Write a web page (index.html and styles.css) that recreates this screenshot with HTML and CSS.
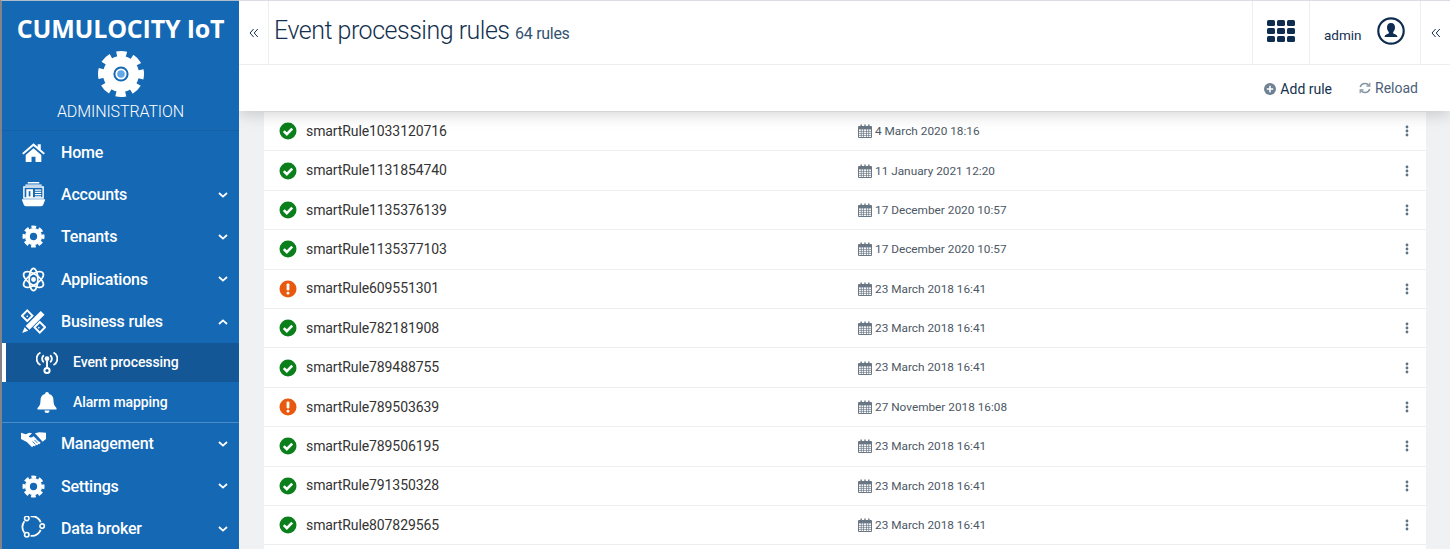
FILE: index.html
```html
<!DOCTYPE html>
<html lang="en">
<head>
<meta charset="utf-8"/>
<title>Event processing rules</title>
<link rel="stylesheet" href="styles.css">
</head>
<body>
<svg class="defs" width="0" height="0">
	<symbol id="gear" viewBox="0 0 24 24">
		<circle cx="12" cy="12" r="9" fill="#fff"/>
		<circle cx="12" cy="12" r="10" fill="none" stroke="#fff" stroke-width="3" stroke-dasharray="4.9 2.95" stroke-dashoffset="2.45"/>
		<circle cx="12" cy="12" r="3.8" fill="#1568b3"/>
	</symbol>
	<symbol id="check" viewBox="0 0 18 18">
		<circle cx="9" cy="9" r="8.5" fill="#0b7f1c"/>
		<path d="M4.8 9.2l3 3 5.4-5.6" fill="none" stroke="#fff" stroke-width="2.6"/>
	</symbol>
	<symbol id="warn" viewBox="0 0 18 18">
		<circle cx="9" cy="9" r="8.5" fill="#e8590f"/>
		<rect x="7.6" y="3.4" width="2.8" height="7.2" rx="1" fill="#fff"/>
		<rect x="7.6" y="11.8" width="2.8" height="2.8" rx="1" fill="#fff"/>
	</symbol>
	<symbol id="cal" viewBox="0 0 14 14">
		<path d="M.5 2.5h13v11H.5z" fill="#fff" stroke="#6a7784"/>
		<path d="M.5 3h13v2.4H.5z" fill="#6a7784"/>
		<path d="M3.2 .5v3M7 .5v3M10.8 .5v3" stroke="#6a7784" stroke-width="1.4"/>
		<path d="M1 7.4h12M1 9.4h12M1 11.4h12M3.3 5v8M5.5 5v8M8.5 5v8M10.7 5v8" stroke="#6a7784" stroke-width=".7"/>
	</symbol>
	<symbol id="dots" viewBox="0 0 4 12">
		<circle cx="2" cy="2" r="1.4" fill="#5e7283"/>
		<circle cx="2" cy="6" r="1.4" fill="#5e7283"/>
		<circle cx="2" cy="10" r="1.4" fill="#5e7283"/>
	</symbol>
	<symbol id="chev" viewBox="0 0 10 6">
		<path d="M1 1l4 3.6L9 1" fill="none" stroke="#fff" stroke-width="1.8"/>
	</symbol>
	<symbol id="dbl" viewBox="0 0 10 10">
		<path d="M4.6 1L1 5l3.6 4M8.8 1L5.2 5l3.6 4" fill="none" stroke="#14304f" stroke-width="1"/>
	</symbol>
</svg>

<aside class="sidebar">
	<div class="brand">
		<div class="brand-name">CUMULOCITY IoT</div>
		<svg class="brand-gear" viewBox="0 0 48 48" width="48" height="48">
			<use href="#gear" width="48" height="48"/>
			<circle cx="24" cy="24" r="5.6" fill="#fff"/>
			<circle cx="24" cy="24" r="3.8" fill="#62a8e8"/>
		</svg>
		<div class="brand-app">ADMINISTRATION</div>
	</div>
	<nav>
		<a class="nav-item">
			<svg class="nav-icon" viewBox="0 0 24 20"><path d="M12 1L1 10.6l1.4 1.4L12 3.8 21.6 12 23 10.6l-4-3.5V2h-3v2.5zM4.5 12.4V19h5.6v-5h3.8v5h5.6v-6.6L12 6z" fill="#fff"/></svg>
			Home
		</a>
		<a class="nav-item">
			<svg class="nav-icon" viewBox="0 0 26 26"><path d="M7 .8h12M4.5 3.2h17" stroke="#fff" stroke-width="1.4"/><path d="M3 5.2h20v11.5H3z" fill="none" stroke="#fff" stroke-width="1.5"/><path d="M5.500 7.500h7v9h-7z" fill="#fff"/><path d="M8 9.500h1.800v5.500H8z" fill="#1568b3"/><path d="M14.500 8.500h6.500M14.500 10.800h6.500M14.500 13.100h6.500M14.500 15.400h6.500" stroke="#fff" stroke-width="1.300"/><path d="M1 18h24v.8l-2 5.200q-.4 1.200-2 1.200H5q-1.600 0-2-1.200L1 18.800z" fill="#fff"/></svg>
			Accounts
			<svg class="chev"><use href="#chev"/></svg>
		</a>
		<a class="nav-item">
			<svg class="nav-icon small"><use href="#gear"/></svg>
			Tenants
			<svg class="chev"><use href="#chev"/></svg>
		</a>
		<a class="nav-item">
			<svg class="nav-icon" viewBox="0 0 26 26" fill="none" stroke="#fff" stroke-width="1.8"><ellipse cx="13" cy="13" rx="12" ry="5.5" transform="rotate(35 13 13)"/><ellipse cx="13" cy="13" rx="12" ry="5.5" transform="rotate(-35 13 13)"/><ellipse cx="13" cy="13" rx="4.5" ry="11.5"/><circle cx="13" cy="13" r="1.6" fill="#fff"/></svg>
			Applications
			<svg class="chev"><use href="#chev"/></svg>
		</a>
		<a class="nav-item">
			<svg class="nav-icon" viewBox="0 0 26 26"><path d="M6.5 1.5l5.500 5.500-5.500 5.500L1 7zM19.500 13.500l5.500 5.500-5.500 5.500L14 19z" fill="none" stroke="#fff" stroke-width="2"/><path d="M6 7l1 1M18 19l1 1" stroke="#fff" stroke-width="1.6"/><path d="M20.500 .5l5 5L9.500 21.500l-5-5z" fill="#1568b3"/><path d="M20.500 2l4 4L8.800 21.700l-4-4zM3.800 19l3.700 3.700L1.200 25z" fill="#fff"/></svg>
			Business rules
			<svg class="chev up"><use href="#chev"/></svg>
		</a>
		<div class="sub">
			<a class="sub-item active">
				<svg class="sub-icon signal" viewBox="0 0 22 24" fill="none" stroke="#fff" stroke-width="1.9"><path d="M4.500 1.500A7 7 0 0 0 4.500 14M17.500 1.500A7 7 0 0 1 17.500 14M7.800 4.200a4.500 4.500 0 0 0 0 7M14.200 4.200a4.500 4.500 0 0 1 0 7"/><circle cx="11" cy="7.700" r="2.400" fill="#fff" stroke="none"/><path d="M11 9.500v7"/><circle cx="11" cy="19.500" r="2.600" stroke-width="2"/></svg>
				Event processing
			</a>
			<a class="sub-item">
				<svg class="sub-icon" viewBox="0 0 22 22"><path d="M11 1a2 2 0 0 1 2 2c3 .8 4.500 3 4.500 6.500 0 4 1 5.500 3 7.500v1.500h-19V17c2-2 3-3.500 3-7.500C4.500 6 6 3.800 9 3a2 2 0 0 1 2-2zM8.500 19.500h5a2.500 2.500 0 0 1-5 0z" fill="#fff"/></svg>
				Alarm mapping
			</a>
		</div>
		<a class="nav-item">
			<svg class="nav-icon hands" viewBox="0 0 26 17"><path d="M0 1.500l5 1.500 3.500-1.500 3 .5-3.500 3.500c1.500 1.500 3.200 1 5-.5l7.500 7-1.500 1.500-1-.5-1 1.500-1.500-.5-1 1.500-1.500-.5-1.500 1.500L6 11 0 8zM14.500 2l4.500-1 7 .5v6.500l-3.500 2.800z" fill="#fff"/><path d="M12 10.500l3 3M14 9l3 3M16 7.800l3 3" stroke="#1568b3" stroke-width=".9"/></svg>
			Management
			<svg class="chev"><use href="#chev"/></svg>
		</a>
		<a class="nav-item">
			<svg class="nav-icon small"><use href="#gear"/></svg>
			Settings
			<svg class="chev"><use href="#chev"/></svg>
		</a>
		<a class="nav-item">
			<svg class="nav-icon" viewBox="0 0 26 26" fill="none" stroke="#fff" stroke-width="1.7"><path d="M3.500 5.500A10.500 10.500 0 0 0 3.500 17.500M10 .3A10.500 10.500 0 0 1 20.500 6.500M20.500 14.500A10.500 10.500 0 0 1 10 20.700" stroke-width="1.9"/><circle cx="6" cy="2.500" r="2.300"/><circle cx="22" cy="10.500" r="2.300"/><circle cx="6" cy="19.500" r="2.300"/></svg>
			Data broker
			<svg class="chev"><use href="#chev"/></svg>
		</a>
	</nav>
</aside>

<div class="content">
	<header class="header">
		<div class="top-bar">
			<button class="collapse"><svg><use href="#dbl"/></svg></button>
			<h1>Event processing rules <small>64 rules</small></h1>
			<button class="apps">
				<svg viewBox="0 0 28 22" width="28" height="22" fill="#0f2d50">
					<rect x="0" y="0" width="8" height="6" rx="1.5"/><rect x="10" y="0" width="8" height="6" rx="1.5"/><rect x="20" y="0" width="8" height="6" rx="1.5"/>
					<rect x="0" y="8" width="8" height="6" rx="1.5"/><rect x="10" y="8" width="8" height="6" rx="1.5"/><rect x="20" y="8" width="8" height="6" rx="1.5"/>
					<rect x="0" y="16" width="8" height="6" rx="1.5"/><rect x="10" y="16" width="8" height="6" rx="1.5"/><rect x="20" y="16" width="8" height="6" rx="1.5"/>
				</svg>
			</button>
			<div class="user">
				<span>admin</span>
				<svg viewBox="0 0 28 28" width="28" height="28"><circle cx="14" cy="14" r="12.7" fill="none" stroke="#0f2d50" stroke-width="2.2"/><path d="M14 6c2.800 0 4 2 4 4.500 0 2-1 3.500-1.800 4.500v1.500c2 .7 4 1.300 4.300 3.500H7.500c.3-2.200 2.300-2.800 4.300-3.500V15c-.8-1-1.800-2.500-1.800-4.500C10 8 11.200 6 14 6z" fill="#0f2d50"/></svg>
			</div>
			<button class="collapse right"><svg><use href="#dbl"/></svg></button>
		</div>
		<div class="action-bar">
			<a class="action add">
				<svg viewBox="0 0 12 12" width="12" height="12"><circle cx="6" cy="6" r="6" fill="#6f8294"/><path d="M6 2.800v6.400M2.800 6h6.400" stroke="#fff" stroke-width="1.6"/></svg>
				Add rule
			</a>
			<a class="action reload">
				<svg viewBox="0 0 12 12" width="12" height="12" fill="none" stroke="#8696a4" stroke-width="1.5"><path d="M1.200 5a5 5 0 0 1 8.800-1.500M10.800 7A5 5 0 0 1 2 8.500"/><path d="M10.800 .8v3.400H7.400M1.200 11.200V7.800h3.400" stroke-width="1.2"/></svg>
				Reload
			</a>
		</div>
	</header>
	<main class="rules">
		<div class="rule"><svg class="status"><use href="#check"/></svg><span class="rule-name">smartRule1033120716</span><span class="rule-date"><svg class="cal"><use href="#cal"/></svg>4 March 2020 18:16</span><svg class="dots"><use href="#dots"/></svg></div>
		<div class="rule"><svg class="status"><use href="#check"/></svg><span class="rule-name">smartRule1131854740</span><span class="rule-date"><svg class="cal"><use href="#cal"/></svg>11 January 2021 12:20</span><svg class="dots"><use href="#dots"/></svg></div>
		<div class="rule"><svg class="status"><use href="#check"/></svg><span class="rule-name">smartRule1135376139</span><span class="rule-date"><svg class="cal"><use href="#cal"/></svg>17 December 2020 10:57</span><svg class="dots"><use href="#dots"/></svg></div>
		<div class="rule"><svg class="status"><use href="#check"/></svg><span class="rule-name">smartRule1135377103</span><span class="rule-date"><svg class="cal"><use href="#cal"/></svg>17 December 2020 10:57</span><svg class="dots"><use href="#dots"/></svg></div>
		<div class="rule"><svg class="status"><use href="#warn"/></svg><span class="rule-name">smartRule609551301</span><span class="rule-date"><svg class="cal"><use href="#cal"/></svg>23 March 2018 16:41</span><svg class="dots"><use href="#dots"/></svg></div>
		<div class="rule"><svg class="status"><use href="#check"/></svg><span class="rule-name">smartRule782181908</span><span class="rule-date"><svg class="cal"><use href="#cal"/></svg>23 March 2018 16:41</span><svg class="dots"><use href="#dots"/></svg></div>
		<div class="rule"><svg class="status"><use href="#check"/></svg><span class="rule-name">smartRule789488755</span><span class="rule-date"><svg class="cal"><use href="#cal"/></svg>23 March 2018 16:41</span><svg class="dots"><use href="#dots"/></svg></div>
		<div class="rule"><svg class="status"><use href="#warn"/></svg><span class="rule-name">smartRule789503639</span><span class="rule-date"><svg class="cal"><use href="#cal"/></svg>27 November 2018 16:08</span><svg class="dots"><use href="#dots"/></svg></div>
		<div class="rule"><svg class="status"><use href="#check"/></svg><span class="rule-name">smartRule789506195</span><span class="rule-date"><svg class="cal"><use href="#cal"/></svg>23 March 2018 16:41</span><svg class="dots"><use href="#dots"/></svg></div>
		<div class="rule"><svg class="status"><use href="#check"/></svg><span class="rule-name">smartRule791350328</span><span class="rule-date"><svg class="cal"><use href="#cal"/></svg>23 March 2018 16:41</span><svg class="dots"><use href="#dots"/></svg></div>
		<div class="rule"><svg class="status"><use href="#check"/></svg><span class="rule-name">smartRule807829565</span><span class="rule-date"><svg class="cal"><use href="#cal"/></svg>23 March 2018 16:41</span><svg class="dots"><use href="#dots"/></svg></div>
	</main>
</div>
</body>
</html>
```

FILE: styles.css
```css
html, body {
	height:100%;
}
body {
	margin:0;
	display:flex;
	overflow:hidden;
	background:#f0f1f3;
	font:400 14px/1.2 Roboto, sans-serif;
	color:#14304f;
}
button {
	padding:0;
	border:none;
	background:none;
}
.defs {
	position:absolute;
}

/* sidebar */
.sidebar {
	width:239px;
	box-sizing:border-box;
	flex:none;
	background:#1568b3;
	border-left:2px solid #808489;
	border-top:1px solid #aebccb;
	color:#fff;
	z-index:2;
}
.brand {
	height:130px;
	padding-top:12px;
	box-sizing:border-box;
	text-align:center;
	border-bottom:1px solid #1460a6;
}
.brand-name {
	font:700 25px/30px "Open Sans", sans-serif;
	letter-spacing:-.2px;
}
.brand-gear {
	display:block;
	margin:7px auto 0;
}
.brand-app {
	margin-top:4px;
	font:300 16px/20px Roboto, sans-serif;
	letter-spacing:-.1px;
}
.nav-item {
	display:flex;
	align-items:center;
	height:42.4px;
	font-size:16px;
	font-weight:500;
	letter-spacing:-.2px;
	padding-left:19px;
}
.nav-icon {
	width:25px;
	height:25px;
	margin-right:15px;
	flex:none;
}
.nav-icon.small {
	width:23px;
	height:23px;
	margin:0 16px 0 1px;
}
.nav-icon.hands {
	height:17px;
	margin-top:-9px;
}
.chev {
	width:10px;
	height:6px;
	margin-left:auto;
	margin-right:11px;
}
.chev.up {
	transform:rotate(180deg);
}
.sub {
	border-bottom:1px solid #4a8cc8;
}
.sub-item {
	display:flex;
	align-items:center;
	height:39.4px;
	padding-left:34px;
	font-size:14px;
	font-weight:500;
	letter-spacing:-.1px;
}
.sub-item.active {
	background:#135796;
	box-shadow:inset 4px 0 0 #fff;
}
.sub-icon {
	width:22px;
	height:22px;
	margin-right:15px;
	flex:none;
}
.sub-icon.signal {
	height:24px;
}

/* header */
.content {
	flex:1;
	min-width:0;
	display:flex;
	flex-direction:column;
}
.header {
	position:relative;
	flex:none;
	height:111px;
	box-sizing:border-box;
	border-top:1px solid #dcdde4;
	background:#fff;
	box-shadow:0 2px 16px rgba(0,0,0,.2);
	z-index:1;
}
.top-bar {
	display:flex;
	align-items:stretch;
	height:63px;
	border-bottom:1px solid #eceef0;
}
.collapse {
	width:30px;
	flex:none;
	display:flex;
	align-items:center;
	justify-content:center;
	border-right:1px solid #eceef0;
}
.collapse svg {
	width:10px;
	height:10px;
}
.collapse.right {
	border-right:none;
	border-left:1px solid #eceef0;
}
h1 {
	flex:1;
	margin:-4px 0 0;
	padding-left:5px;
	align-self:center;
	font-size:25px;
	font-weight:300;
	letter-spacing:-.5px;
}
h1 small {
	font-size:16px;
	font-weight:400;
	letter-spacing:-.3px;
	color:#33526f;
}
.apps {
	width:57px;
	display:flex;
	align-items:center;
	justify-content:center;
	padding-bottom:3px;
	border-left:1px solid #eceef0;
}
.user {
	width:111px;
	box-sizing:border-box;
	display:flex;
	align-items:center;
	gap:15px;
	padding-left:14px;
	padding-bottom:1px;
	border-left:1px solid #eceef0;
	font-size:13.5px;
}
.user span {
	margin-top:6px;
}
.user svg {
	margin-top:-2px;
}
.action-bar {
	display:flex;
	justify-content:flex-end;
	align-items:center;
	height:46px;
	padding-right:32px;
	gap:27px;
}
.action {
	display:flex;
	align-items:center;
	gap:4px;
}
.add {
	margin-top:2px;
}
.reload {
	color:#4a6178;
}

/* rule list */
.rules {
	flex:1;
	margin:1px 24px 0 25px;
	background:#fff;
}
.rule {
	display:flex;
	align-items:center;
	height:39.4px;
	box-sizing:border-box;
	padding-left:15px;
	border-bottom:1px solid #eceef0;
	color:#333;
}
.status {
	width:18px;
	height:18px;
	margin-right:9px;
	flex:none;
}
.rule-name {
	width:552px;
	flex:none;
	letter-spacing:-.1px;
}
.rule-date {
	display:flex;
	align-items:center;
	gap:3px;
	font-size:11.8px;
	color:#4c5864;
}
.cal {
	width:14px;
	height:14px;
}
.dots {
	width:4px;
	height:12px;
	margin-left:auto;
	margin-right:17px;
}
```
